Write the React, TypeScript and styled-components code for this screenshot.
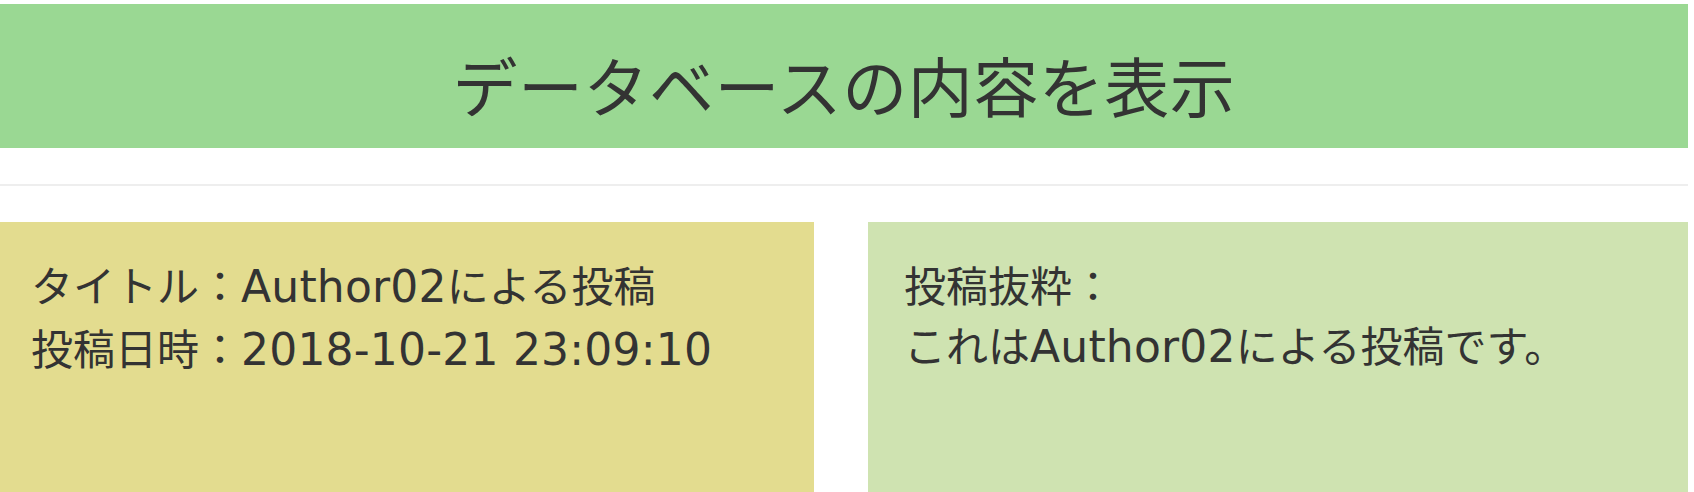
import React from "react";
import styled, { createGlobalStyle } from "styled-components";

const GlobalStyle = createGlobalStyle`
  html, body {
    margin: 0;
    padding: 0;
    background: #ffffff;
  }
  body {
    padding-top: 4px;
    font-family: "Noto Sans CJK JP", "Noto Sans", sans-serif;
    color: #333333;
  }
`;

const Page = styled.div`
  width: 1688px;
  display: flex;
  flex-direction: column;
`;

const Header = styled.header`
  height: 144px;
  box-sizing: border-box;
  padding-top: 32px;
  background: #9ad893;
  display: flex;
  justify-content: center;
  align-items: flex-start;
`;

const Title = styled.h1`
  margin: 0;
  font-family: "Noto Sans CJK JP", sans-serif;
  font-weight: 400;
  font-size: 65px;
  line-height: 1.5;
  color: #333333;
  letter-spacing: 0.5px;
`;

const Divider = styled.hr`
  margin: 36px 0 0;
  border: 0;
  height: 2px;
  background: #eeeeee;
`;

const Cards = styled.section`
  margin-top: 36px;
  display: grid;
  grid-template-columns: 814px 820px;
  column-gap: 54px;
`;

const Card = styled.div<{ $bg: string; $padLeft: number }>`
  background: ${(p) => p.$bg};
  height: 270px;
  box-sizing: border-box;
  padding: 32px 0 0 ${(p) => p.$padLeft}px;
`;

const Line = styled.p`
  margin: 0;
  font-family: "Noto Sans CJK JP", sans-serif;
  font-size: 42px;
  line-height: 60px;
  color: #333333;
  white-space: nowrap;
`;

const Latin = styled.span`
  font-family: "DejaVu Sans", "Noto Sans CJK JP", sans-serif;
  font-size: 44px;
  letter-spacing: 0.2px;
`;

export default function App() {
  return (
    <>
      <GlobalStyle />
      <Page>
        <Header>
          <Title>データベースの内容を表示</Title>
        </Header>
        <Divider />
        <Cards>
          <Card $bg="#e3dc8f" $padLeft={31}>
            <Line>
              タイトル：<Latin>Author02</Latin>による投稿
            </Line>
            <Line>
              投稿日時：<Latin>2018-10-21 23:09:10</Latin>
            </Line>
          </Card>
          <Card $bg="#cfe3b1" $padLeft={36}>
            <Line>投稿抜粋：</Line>
            <Line>
              これは<Latin>Author02</Latin>による投稿です。
            </Line>
          </Card>
        </Cards>
      </Page>
    </>
  );
}
